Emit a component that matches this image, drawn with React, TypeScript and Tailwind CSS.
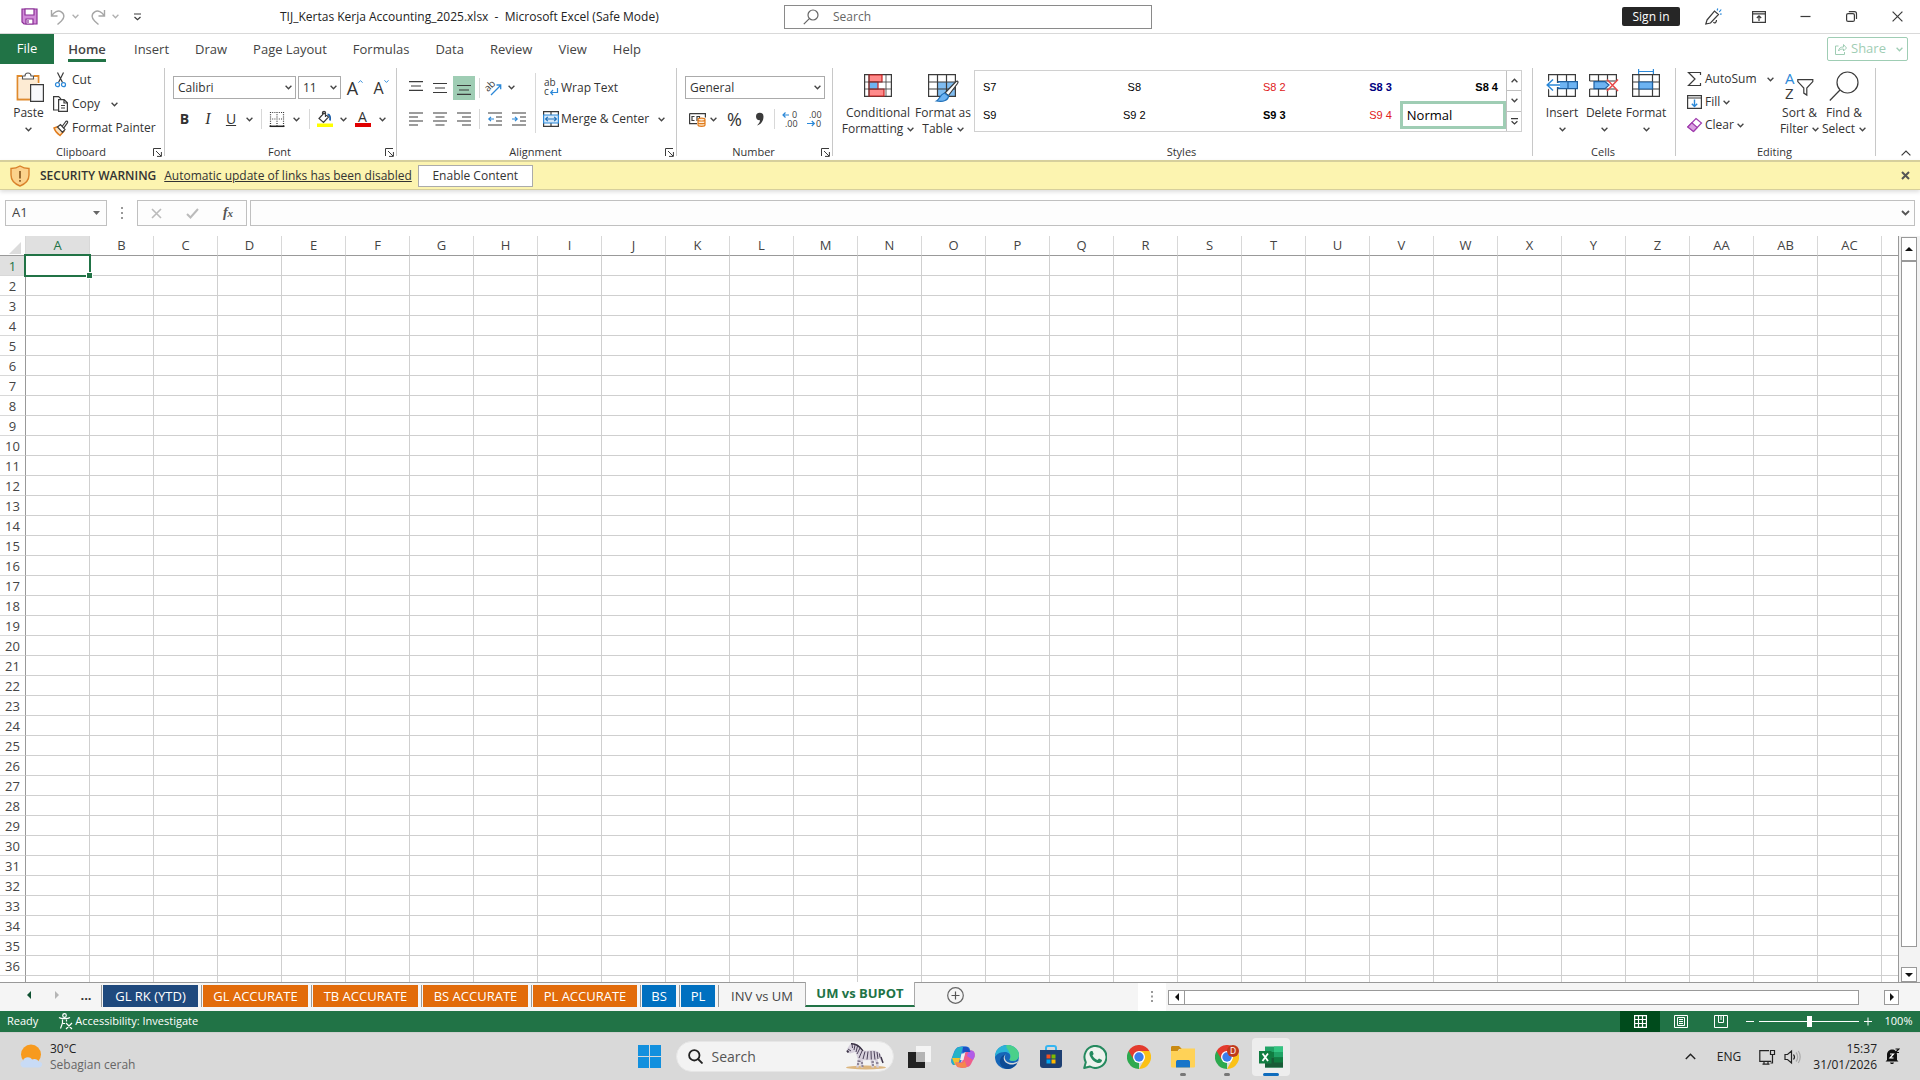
import type { ReactNode } from "react";
import clsx from "clsx";

const columns = [
  "A", "B", "C", "D", "E", "F", "G", "H", "I", "J", "K", "L", "M", "N", "O", "P", "Q", "R", "S", "T",
  "U", "V", "W", "X", "Y", "Z", "AA", "AB", "AC", "",
];
const rows = Array.from({ length: 37 }, (_, i) => (i < 36 ? String(i + 1) : ""));

const ribbonTabs = ["Insert", "Draw", "Page Layout", "Formulas", "Data", "Review", "View", "Help"];

const sheets = [
  { name: "GL RK (YTD)", style: "bg-[#1f497d] w-[95px]" },
  { name: "GL ACCURATE", style: "bg-[#e26b0a] w-[105px]" },
  { name: "TB ACCURATE", style: "bg-[#e26b0a] w-[105px]" },
  { name: "BS ACCURATE", style: "bg-[#e26b0a] w-[105px]" },
  { name: "PL ACCURATE", style: "bg-[#e26b0a] w-[104px]" },
  { name: "BS", style: "bg-[#0070c0] w-[34px]" },
  { name: "PL", style: "bg-[#0070c0] w-[34px]" },
];

const cellStyles = [
  { name: "S7", style: "text-left" },
  { name: "S8", style: "text-center" },
  { name: "S8 2", style: "text-right text-[#e02020]" },
  { name: "S8 3", style: "text-right font-bold text-[#000080]" },
  { name: "S8 4", style: "text-right font-bold" },
  { name: "S9", style: "text-left" },
  { name: "S9 2", style: "text-center" },
  { name: "S9 3", style: "text-right font-bold" },
  { name: "S9 4", style: "text-right text-[#e02020]" },
];

/* ---------- small shared pieces ---------- */

const Chevron = ({ up = false, className = "text-[#444]" }: { up?: boolean; className?: string }) => (
  <svg width="7" height="5" viewBox="0 0 7 5" className={clsx("shrink-0", className)} fill="none" stroke="currentColor" strokeWidth="1.3">
    <path d={up ? "M.6 4.2 3.5 1.2l2.9 3" : "M.6.8l2.9 3 2.9-3"} />
  </svg>
);

const Icon = ({ w = 16, h = 16, children }: { w?: number; h?: number; children: ReactNode }) => (
  <svg width={w} height={h} viewBox={`0 0 ${w} ${h}`} className="shrink-0 overflow-visible" fill="none" stroke="#3b3b3b" strokeWidth="1.2">
    {children}
  </svg>
);

const Tool = ({ label, className, children }: { label: string; className?: string; children: ReactNode }) => (
  <button aria-label={label} className={clsx("flex items-center justify-center h-6 shrink-0", className)}>
    {children}
  </button>
);

const Divider = () => <span className="w-px h-5 bg-[#d8d8d8] shrink-0" />;

const Launcher = ({ label }: { label: string }) => (
  <button aria-label={`${label} settings`} className="shrink-0">
    <Icon w={9} h={9}>
      <path d="M.5 8V.5H8M3 3l5 5M8.4 4v4.4H4" strokeWidth="1" />
    </Icon>
  </button>
);

type GroupProps = { name: string; launcher?: boolean; className: string; children: ReactNode };

const Group = ({ name, launcher, className, children }: GroupProps) => (
  <section className={clsx("flex flex-col h-[88px] border-r border-[#c8c8c8] shrink-0", className)}>
    <div className="flex flex-1 min-w-0">{children}</div>
    <div className="flex items-center h-4 mt-1 mb-[-4px] pr-0.5 text-[11px]">
      {launcher && <span className="w-[9px]" />}
      <span className="flex-1 text-center">{name}</span>
      {launcher && <Launcher label={name} />}
    </div>
  </section>
);

const Combo = ({ label, value, className }: { label: string; value: string; className: string }) => (
  <div className={clsx("relative flex items-center h-[23px] border border-[#ababab] bg-white", className)}>
    <select aria-label={label} defaultValue={value} className="appearance-none w-full h-full pl-1 text-xs bg-transparent outline-none">
      <option>{value}</option>
    </select>
    <span className="absolute right-[3px] pointer-events-none">
      <Chevron />
    </span>
  </div>
);

const BigButton = ({ lines, width, icon }: { lines: string[]; width: string; icon: ReactNode }) => (
  <button className={clsx("flex flex-col items-center shrink-0", width)}>
    <span className="flex items-end justify-center h-[34px] mb-[3px]">{icon}</span>
    <span className="text-xs leading-4 whitespace-nowrap">{lines[0]}</span>
    <span className="flex items-center gap-1 h-4 text-xs leading-4">
      {lines[1]}
      <Chevron />
    </span>
  </button>
);

/* ---------- title bar ---------- */

const TitleBar = () => (
  <header className="flex items-center h-[34px] border-b border-[#d9d9d9] shrink-0">
    <div className="flex flex-1 items-center min-w-0">
      <Tool label="Save" className="w-[18px] ml-5">
        <svg width="17" height="17" viewBox="0 0 17 17" className="shrink-0" fill="#d18bd8" stroke="#8a2f96" strokeWidth="1.2">
          <path d="M1 1h15v15H3l-2-2z" />
          <path d="M4 1h9v6H4zM5 11h7v5H5z" fill="#fff" />
          <path d="M7 12v3" />
        </svg>
      </Tool>
      <Tool label="Undo" className="w-4 ml-3">
        <Icon>
          <path d="M1.5 1v6h6M1.8 6.6C4 3 8 .8 11.2 2.800c4 2.400 3 6.700.2 9.200L7.500 15.500" stroke="#a6a6a6" strokeWidth="1.4" />
        </Icon>
      </Tool>
      <Tool label="Undo history" className="w-[18px]"><Chevron className="text-[#b0b0b0]" /></Tool>
      <Tool label="Redo" className="w-4 ml-1.5">
        <Icon>
          <path d="M14.500 1v6h-6M14.200 6.600C12 3 8 .8 4.800 2.800c-4 2.400-3 6.700-.2 9.200L8.500 15.500" stroke="#a6a6a6" strokeWidth="1.4" />
        </Icon>
      </Tool>
      <Tool label="Redo history" className="w-[18px]"><Chevron className="text-[#b0b0b0]" /></Tool>
      <Tool label="Customize Quick Access Toolbar" className="w-[18px] ml-1">
        <Icon w={9} h={8}><path d="M1 1h7M1.500 4l3 2.800 3-2.800" /></Icon>
      </Tool>
      <h1 className="ml-[134px] text-xs whitespace-pre text-[#222]">TIJ_Kertas Kerja Accounting_2025.xlsx  -  Microsoft Excel (Safe Mode)</h1>
    </div>
    <label className="flex items-center w-[368px] h-6 ml-4 pl-[18px] border border-[#8a8a8a] bg-white">
      <Icon>
        <circle cx="10" cy="6" r="5" stroke="#666" />
        <path d="M6.300 9.700.8 15.200" stroke="#666" />
      </Icon>
      <input aria-label="Search" placeholder="Search" className="flex-1 min-w-0 ml-3.5 text-xs outline-none placeholder:text-[#666]" />
    </label>
    <div className="flex flex-1 items-center justify-end">
      <button className="w-[58px] h-[19px] mr-[10px] rounded-[2px] bg-[#262626] text-white text-xs leading-4">Sign in</button>
      <Tool label="Coming soon" className="w-[46px]">
        <Icon w={17} h={17}>
          <path d="M2 12 9.500 3l4 3.500-8 8.500L.8 16zM8.500 14c1 2 3 .5 3-2" />
          <path d="M12.200 2.500l.5-2M14.200 4l2-2.500M15 6.200l1.800-.2" stroke="#2b88d8" />
        </Icon>
      </Tool>
      <Tool label="Ribbon Display Options" className="w-[46px]">
        <Icon w={14} h={12}><path d="M.6.6h12.800v10.800H.6zM.6 2.800h12.800M7 10V5M4.800 7 7 4.800 9.200 7" /></Icon>
      </Tool>
      <Tool label="Minimize" className="w-[46px]"><Icon w={11} h={11}><path d="M.5 5.500h10" /></Icon></Tool>
      <Tool label="Restore" className="w-[46px]">
        <Icon w={11} h={11}><rect x=".6" y="2.600" width="7.800" height="7.800" rx="1.500" /><path d="M2.800.7H8.500a2 2 0 0 1 2 2V8" /></Icon>
      </Tool>
      <Tool label="Close" className="w-[46px]"><Icon w={11} h={11}><path d="M.6.6l9.800 9.800M10.400.6.6 10.400" /></Icon></Tool>
    </div>
  </header>
);

const TabBar = () => (
  <nav className="flex items-center h-[30px] shrink-0 text-[13px] text-[#444]">
    <button className="w-[54px] h-[30px] bg-[#217346] text-white">File</button>
    <button className="flex flex-col items-center w-[38px] ml-[14px] mt-[3px] font-semibold">
      <span className="leading-5">Home</span>
      <span className="w-[38px] h-[3px] bg-[#217346]" />
    </button>
    <div className="flex ml-[28px] pt-px gap-[26px]">
      {ribbonTabs.map((tab) => (
        <button key={tab} className="whitespace-nowrap">{tab}</button>
      ))}
    </div>
    <button disabled className="flex items-center w-[81px] h-6 ml-auto mr-3 pl-[7px] border border-[#9fcdb4] rounded-[2px] text-[#9fcdb4]">
      <svg width="12" height="12" viewBox="0 0 12 12" fill="none" stroke="currentColor">
        <path d="M3.500 3H.5v8.500h9V9M3.500 8c.5-3 2-4 5-4V1.500l3 3.500-3 3V6c-2.500 0-4 .5-5 2z" />
      </svg>
      <span className="ml-1 flex-1 text-left">Share</span>
      <span className="mr-1"><Chevron className="text-[#9fcdb4]" /></span>
    </button>
  </nav>
);

/* ---------- ribbon ---------- */

const Lines = ({ d }: { d: string }) => (
  <Icon w={14} h={14}><path d={d} /></Icon>
);

const ClipboardGroup = () => (
  <Group name="Clipboard" launcher className="w-[165px]">
    <button className="flex flex-col items-center w-[49px] ml-1">
      <span className="h-[37px] pt-1 pl-1">
        <svg width="29" height="31" viewBox="0 0 29 31" fill="none">
          <path d="M6 4H1.500v23.500H14M18 4h4.500v7" stroke="#e08a2c" strokeWidth="1.800" />
          <path d="M3 6h18v6h-7v14H3z" fill="#fdebd3" />
          <path d="M6.500 7V4H9c0-4 6-4 6 0h2.500v3z" fill="#fff" stroke="#555" strokeWidth="1.100" />
          <path d="M14.600 12.600h12.800v16.800H14.600z" fill="#f8f9fc" stroke="#3b3b3b" strokeWidth="1.200" />
        </svg>
      </span>
      <span className="text-xs leading-4">Paste</span>
      <span className="flex items-center h-4"><Chevron /></span>
    </button>
    <div className="flex flex-col text-xs">
      <button className="flex items-center h-6 gap-1">
        <Icon w={15}>
          <path d="M4.500.5l5 10M10.500.5l-5 10" />
          <circle cx="4.500" cy="12.700" r="2" stroke="#2b88d8" /><circle cx="10.500" cy="12.700" r="2" stroke="#2b88d8" />
        </Icon>
        Cut
      </button>
      <div className="flex items-center h-6">
        <button className="flex items-center gap-1">
          <Icon w={15}>
            <path d="M5 14H.6V.6h5L8 3M5.600 3.600h5.500l3.300 3.200v8.600H5.600zM11 3.800V7h3.300M8 9.500h4M8 12h4" />
          </Icon>
          Copy
        </button>
        <Tool label="Copy options" className="w-5 ml-1"><Chevron /></Tool>
      </div>
      <button className="flex items-center h-6 gap-1 whitespace-nowrap">
        <Icon w={15}>
          <path d="M1 8l4-1.500L11 11l-4 4.500C5 14 2 11.500 1 8z" fill="#fde3c2" stroke="#e07b1c" strokeWidth="1.400" />
          <path d="M4.500 7l3-2.500 4.500 5-2.500 2.800zM9.500 6l3.300-4.500c1-1.200 2.500.2 1.600 1.400L11 7.700" fill="#fff" />
        </Icon>
        Format Painter
      </button>
    </div>
  </Group>
);

const FontGroup = () => (
  <Group name="Font" launcher className="w-[232px]">
    <div className="flex flex-col pl-2 pt-2">
      <div className="flex items-center h-[23px] gap-0.5">
        <Combo label="Font" value="Calibri" className="w-[123px]" />
        <Combo label="Font size" value="11" className="w-[43px]" />
        <Tool label="Increase font size" className="w-6">
          <span className="text-lg leading-5">A</span>
          <span className="self-start mt-[3px]"><Chevron up className="text-[#2b88d8] w-[5px]" /></span>
        </Tool>
        <Tool label="Decrease font size" className="w-5 ml-0.5">
          <span className="text-base leading-5">A</span>
          <span className="self-start mt-[3px]"><Chevron className="text-[#2b88d8] w-[5px]" /></span>
        </Tool>
      </div>
      <div className="flex items-center h-6 mt-2">
        <button className="w-[23px] text-sm font-bold">B</button>
        <button className="w-6 font-[Liberation_Serif,serif] text-base italic">I</button>
        <button className="w-[22px] text-sm underline">U</button>
        <Tool label="Underline style" className="w-[14px]"><Chevron /></Tool>
        <span className="w-[5px]" />
        <Divider />
        <Tool label="Borders" className="w-[30px]">
          <Icon>
            <path d="M1.500 1v14M14.500 1v14M8 1v14M1 1.500h14M1 8h14" strokeDasharray="1 1.200" />
            <path d="M.5 15.300h15" strokeWidth="1.500" stroke="#222" />
          </Icon>
        </Tool>
        <Tool label="Border style" className="w-2"><Chevron /></Tool>
        <span className="w-[9px]" />
        <Divider />
        <Tool label="Fill color" className="w-[29px]">
          <Icon>
            <path d="M7 2 2 7.500l4.500 4 5-5.500zM5.500 4V1.500c0-1.500 3-1.500 3 0V6" fill="#fff" />
            <path d="M10.500 3.500c2.500 0 3 2.500 2.500 6" stroke="#1f5fa8" strokeWidth="1.800" />
            <path d="M0 12.500h16V16H0z" fill="#ffff00" stroke="none" />
          </Icon>
        </Tool>
        <Tool label="Fill color options" className="w-2"><Chevron /></Tool>
        <Tool label="Font color" className="w-[31px]">
          <span className="flex flex-col items-center w-4">
            <span className="h-3 text-sm leading-3">A</span>
            <span className="w-4 h-1 bg-[#e00000]" />
          </span>
        </Tool>
        <Tool label="Font color options" className="w-2"><Chevron /></Tool>
      </div>
    </div>
  </Group>
);

const AlignmentGroup = () => (
  <Group name="Alignment" launcher className="w-[280px]">
    <div className="flex flex-col pl-[7px] pt-2">
      <div className="flex items-center h-[23px]">
        <Tool label="Top align" className="w-6"><Lines d="M0 .6h14M2 5h10M0 9.400h14" /></Tool>
        <Tool label="Middle align" className="w-6"><Lines d="M0 2.500h14M2 7h10M0 11.500h14" /></Tool>
        <Tool label="Bottom align" className="w-[22px] ml-px bg-[#9fcdb4]"><Lines d="M0 4.500h14M2 9h10M0 13.400h14" /></Tool>
        <span className="w-1" />
        <Divider />
        <Tool label="Orientation" className="w-[27px]">
          <Icon w={17}>
            <g transform="rotate(-45 5 6)">
              <text x="-1" y="9" fontSize="10" fill="#3b3b3b" stroke="none">ab</text>
            </g>
            <path d="M6 15 15.500 5.500M11.500 5h4.200v4.200" stroke="#2b88d8" strokeWidth="1.300" />
          </Icon>
        </Tool>
        <Tool label="Orientation options" className="w-2"><Chevron /></Tool>
      </div>
      <div className="flex items-center h-6 mt-2">
        <Tool label="Align left" className="w-6"><Lines d="M0 1h14M0 5h9M0 9h14M0 13h9" /></Tool>
        <Tool label="Center" className="w-6"><Lines d="M0 1h14M2.500 5h9M0 9h14M2.500 13h9" /></Tool>
        <Tool label="Align right" className="w-6"><Lines d="M0 1h14M5 5h9M0 9h14M5 13h9" /></Tool>
        <span className="w-[3px]" />
        <Divider />
        <Tool label="Decrease indent" className="w-[29px]">
          <Icon w={14} h={14}><path d="M0 1h14M8 5h6M8 9h6M0 13h14" /><path d="M6 7H.8M3 4.800.8 7 3 9.200" stroke="#2b88d8" /></Icon>
        </Tool>
        <Tool label="Increase indent" className="w-5">
          <Icon w={14} h={14}><path d="M0 1h14M8 5h6M8 9h6M0 13h14" /><path d="M0 7h5.200M3 4.800 5.200 7 3 9.200" stroke="#2b88d8" /></Icon>
        </Tool>
      </div>
    </div>
    <span className="w-px h-[60px] mt-[5px] ml-[6px] bg-[#d8d8d8]" />
    <div className="flex flex-col pl-[7px] pt-2 text-xs whitespace-nowrap">
      <button className="flex items-center h-[23px] gap-0.5">
        <Icon>
          <text x="1" y="6" fontSize="10" fill="#3b3b3b" stroke="none">ab</text>
          <text x="1" y="15" fontSize="10" fill="#3b3b3b" stroke="none">c</text>
          <path d="M14.500 8v4.500H8M10 10l-2.300 2.500L10 15" stroke="#2b88d8" />
        </Icon>
        Wrap Text
      </button>
      <div className="flex items-center h-6 mt-2">
        <button className="flex items-center gap-0.5">
          <Icon>
            <path d="M.6.6h14.800v14.800H.6zM8 .6V4M8 12v3.400" />
            <path d="M.6 4h14.800v8H.6z" fill="#d5e9fa" stroke="#2b88d8" />
            <path d="M2.500 8h11M4.800 5.800 2.600 8l2.200 2.200M11.200 5.800 13.400 8l-2.200 2.200" stroke="#1f6fb8" />
          </Icon>
          Merge &amp; Center
        </button>
        <Tool label="Merge options" className="w-5 ml-0.5"><Chevron /></Tool>
      </div>
    </div>
  </Group>
);

const NumberGroup = () => (
  <Group name="Number" launcher className="w-[156px]">
    <div className="flex flex-col pl-2 pt-2">
      <Combo label="Number format" value="General" className="w-[140px]" />
      <div className="flex items-center h-6 mt-2">
        <Tool label="Accounting format" className="w-6">
          <Icon w={17}>
            <path d="M.6 2.600h15.800v4M.6 2.600v10H8M5.500 5.500H3v4h2.500M8 10V5.500h2.500v2" />
            <path d="M9 8.500c0-1.800 7-1.800 7 0v5.500c0 1.800-7 1.800-7 0zM9 8.800c0 1.600 7 1.600 7 0M9 11.500c0 1.600 7 1.600 7 0" fill="#fde3c2" stroke="#e07b1c" />
          </Icon>
        </Tool>
        <Tool label="Accounting options" className="w-2"><Chevron /></Tool>
        <Tool label="Percent style" className="w-[35px]"><span className="text-lg leading-5">%</span></Tool>
        <Tool label="Comma style" className="w-[14px]">
          <Icon w={9} h={13}><path d="M1 3.500a3.500 3.500 0 0 1 7.500 0C8.500 8 6 11.500 2 12.500c2-2 3-3.500 3-5.200C2.500 7.500 1 6 1 3.500z" fill="#3b3b3b" stroke="none" /></Icon>
        </Tool>
        <span className="w-2" />
        <Divider />
        <Tool label="Increase decimal" className="w-[30px]">
          <Icon w={17}>
            <path d="M7 4H1.200M3.500 1.500 1 4l2.500 2.500" stroke="#2b88d8" />
            <text x="10" y="7" fontSize="9" fill="#3b3b3b" stroke="none">0</text>
            <text x="3" y="16" fontSize="9" fill="#3b3b3b" stroke="none">.00</text>
          </Icon>
        </Tool>
        <Tool label="Decrease decimal" className="w-[18px]">
          <Icon w={17}>
            <text x="3" y="7" fontSize="9" fill="#3b3b3b" stroke="none">.00</text>
            <path d="M1 12.500h7M5.800 10l2.500 2.500L5.800 15" stroke="#2b88d8" />
            <text x="10" y="16" fontSize="9" fill="#3b3b3b" stroke="none">0</text>
          </Icon>
        </Tool>
      </div>
    </div>
  </Group>
);

const StylesGroup = () => (
  <Group name="Styles" className="flex-1 min-w-0">
    <div className="flex pl-[11px]">
      <BigButton
        lines={["Conditional", "Formatting"]}
        width="w-[68px]"
        icon={
          <Icon w={28} h={28}>
            <path d="M.6.6h26.800v21.800H.6z" fill="#fff" />
            <path d="M5 1h13v7H5zM5 15h15v7H5z" fill="#ff8a8a" stroke="#c22" />
            <path d="M5 8h9v7H5z" fill="#6db3f2" stroke="#c22" />
            <path d="M.6 8h26.800M.6 15h26.800M5 .6v21.800M22 .6v21.800" strokeWidth=".8" />
          </Icon>
        }
      />
      <BigButton
        lines={["Format as", "Table"]}
        width="w-[62px]"
        icon={
          <Icon w={31} h={28}>
            <path d="M9 8h18v14.400H9z" fill="#7fbcf0" stroke="none" />
            <path d="M.6.6h26.800v21.800H.6zM.6 8h26.800M.6 15h26.800M9.500.6v21.800M18.500.6v21.800" />
            <path d="M28 7.500c2-1 2.500.5 1.500 2l-9 12-3.500-2.500z" fill="#fff" />
            <path d="M16.500 19l4 3c0 4-5 6.500-12 5 3.500-1.500 3-6.500 8-8z" fill="#6db3f2" stroke="#1f6fb8" />
          </Icon>
        }
      />
    </div>
    <div className="flex flex-1 min-w-0 h-[62px] mt-0.5 mr-[10px] border border-[#d0d0d0] bg-white">
      <div className="grid flex-1 grid-cols-5 grid-rows-2 pt-0.5 pb-0.5 font-[Liberation_Sans,sans-serif] text-[11px] text-black">
        {cellStyles.map((s) => (
          <button key={s.name} className={clsx("px-2", s.style)}>{s.name}</button>
        ))}
        <button className="border-3 border-[#9fcdb4] pl-1 text-left font-[Open_Sans,sans-serif] text-[13px] leading-4">Normal</button>
      </div>
      <div className="flex flex-col w-[15px] border-l border-[#c0c0c0]">
        <Tool label="Previous styles" className="flex-1 border-b border-[#c0c0c0]"><Chevron up /></Tool>
        <Tool label="Next styles" className="flex-1 border-b border-[#c0c0c0]"><Chevron /></Tool>
        <Tool label="More styles" className="flex-1"><Icon w={7} h={7}><path d="M0 .6h7M.6 3.200l2.900 2.800 2.900-2.800" /></Icon></Tool>
      </div>
    </div>
  </Group>
);

const CellsGroup = () => (
  <Group name="Cells" className="w-[143px]">
    <div className="flex pl-2">
      <BigButton
        lines={["Insert", ""]}
        width="w-[42px]"
        icon={
          <Icon w={32} h={28}>
            <path d="M2.600.6h26.800v21.800H2.600zM11.500.6v21.800M20.500.6v21.800" />
            <path d="M12 7.600h19.400v7H12z" fill="#6db3f2" stroke="#1f5f9f" /><path d="M22 8v6.500" stroke="#1f5f9f" />
            <path d="M14 11H1M7 5.500 1.200 11 7 16.500" stroke="#fff" strokeWidth="4" />
            <path d="M14 11H1M7 5.500 1.200 11 7 16.500" stroke="#2b88d8" strokeWidth="1.500" />
          </Icon>
        }
      />
      <BigButton
        lines={["Delete", ""]}
        width="w-[42px]"
        icon={
          <Icon w={30} h={28}>
            <path d="M.6 7V.6h26.800V7M.6 15v7.400h26.800V15M9.500.6V7M18.500.6V7M9.500 15v7.400M18.500 15v7.400M.6 7h26M.6 15h26" />
            <path d="M5 7.600h11l4 3.500-4 3.500H5z" fill="#6db3f2" stroke="#1f5f9f" />
            <path d="M18 5.500 29 17M29 5.500 18 17" stroke="#e84a4a" strokeWidth="1.500" />
          </Icon>
        }
      />
      <BigButton
        lines={["Format", ""]}
        width="w-[42px]"
        icon={
          <Icon w={28} h={33}>
            <path d="M6.600 0v5M21.400 0v5M7 2.500h14" stroke="#2b88d8" />
            <path d="M.6 5.600h26.800v21.800H.6zM.6 13h26.800M.6 20h26.800M7 5.600v21.800M20.500 5.600v21.800" />
            <path d="M7 13h13.500v7H7z" fill="#6db3f2" stroke="#1f5f9f" />
          </Icon>
        }
      />
    </div>
  </Group>
);

const EditingGroup = () => (
  <Group name="Editing" className="w-[200px]">
    <div className="flex flex-col w-[102px] pl-[11px] text-xs">
      <div className="flex items-center h-[22px]">
        <button className="flex items-center gap-[3px]">
          <Icon w={15}><path d="M13.500 4V1.500H1.500L8 8l-6.500 6.500h12V12" /></Icon>
          AutoSum
        </button>
        <Tool label="AutoSum options" className="w-4 ml-auto"><Chevron /></Tool>
      </div>
      <button className="flex items-center h-6 gap-[3px]">
        <Icon w={15}>
          <path d="M.6 1.600h13.800v12.800H.6zM.6 4h13.800" /><path d="M7.500 5.500v7M4.800 9.800l2.700 2.700 2.700-2.700" stroke="#2b88d8" strokeWidth="1.400" />
        </Icon>
        Fill <Chevron />
      </button>
      <button className="flex items-center h-[22px] gap-[3px]">
        <Icon w={15}>
          <path d="M9 1.500 14.500 6 6.500 14.500.8 10z" fill="#fff" stroke="#a03cae" /><path d="M4.800 5.800 10.300 10.500 6.500 14.500.8 10z" fill="#d9a0e0" stroke="#a03cae" />
        </Icon>
        Clear <Chevron />
      </button>
    </div>
    <BigButton
      lines={["Sort &", "Filter"]}
      width="w-[43px]"
      icon={
        <Icon w={29} h={30}>
          <text x="0" y="12" fontSize="15" fill="#2b88d8" stroke="none">A</text>
          <text x="0" y="27" fontSize="15" fill="#3b3b3b" stroke="none">Z</text>
          <path d="M12.800 7.600h15v2l-6 6.500v7l-3-2v-5l-6-6.500z" />
        </Icon>
      }
    />
    <BigButton
      lines={["Find &", "Select"]}
      width="w-[46px]"
      icon={<Icon w={30} h={31}><circle cx="18.500" cy="11.500" r="10.500" /><path d="M11 19 .8 29.500" /></Icon>}
    />
  </Group>
);

const Ribbon = () => (
  <div className="flex h-24 pt-1 shrink-0 text-[#333]">
    <ClipboardGroup />
    <FontGroup />
    <AlignmentGroup />
    <NumberGroup />
    <StylesGroup />
    <CellsGroup />
    <EditingGroup />
    <button aria-label="Collapse the Ribbon" className="flex items-end justify-center w-[44px] pl-4 pb-1">
      <Icon w={10} h={6}><path d="M.6 5.400 5 1l4.400 4.400" /></Icon>
    </button>
  </div>
);

/* ---------- message bar and formula bar ---------- */

const SecurityWarning = () => (
  <div role="alert" className="flex items-center h-[30px] px-[10px] border-t-2 border-b border-[#d6cf9c] bg-[#fcf4b0] shrink-0 text-xs text-[#333] shadow-[0_2px_4px_#0002]">
    <svg width="20" height="22" viewBox="0 0 20 22" fill="#fbd28b" stroke="#d9822b" strokeWidth="1.400">
      <path d="M10 1c3 2 6 2.500 9 2.500V10c0 5.500-4 9-9 11-5-2-9-5.500-9-11V3.500C4 3.500 7 3 10 1z" />
      <path d="M10 6v7.500M10 15v1.800" stroke="#7a4a12" strokeWidth="1.500" />
    </svg>
    <span className="ml-[10px] font-semibold">SECURITY WARNING</span>
    <a href="#links" className="ml-2 underline">Automatic update of links has been disabled</a>
    <button className="w-[115px] h-[22px] ml-1.5 border border-[#ababab] bg-white">Enable Content</button>
    <button aria-label="Close message" className="ml-auto">
      <svg width="9" height="9" viewBox="0 0 9 9" stroke="#555" strokeWidth="2"><path d="M1 1l7 7M8 1 1 8" /></svg>
    </button>
  </div>
);

const FormulaBar = () => (
  <div className="flex items-center h-[46px] px-[5px] shrink-0 text-[#444]">
    <div className="flex items-center w-[102px] h-[26px] pr-1.5 border border-[#c0c0c0] bg-[#fdfdfd]">
      <input aria-label="Name Box" defaultValue="A1" className="flex-1 min-w-0 pl-1.5 text-[13px] outline-none" />
      <svg width="7" height="5" viewBox="0 0 7 5" fill="#666"><path d="M0 0h7L3.500 4z" /></svg>
    </div>
    <svg width="30" height="12" viewBox="0 0 30 12" fill="#999"><path d="M14 0h2v2h-2zM14 5h2v2h-2zM14 10h2v2h-2z" /></svg>
    <div className="flex items-center w-[110px] h-[26px] border border-[#c0c0c0] bg-[#fdfdfd]">
      <Tool label="Cancel" className="w-9"><svg width="11" height="11" viewBox="0 0 11 11" stroke="#bbb" strokeWidth="1.600"><path d="M1 1l9 9M10 1l-9 9" /></svg></Tool>
      <Tool label="Enter" className="w-9"><svg width="13" height="11" viewBox="0 0 13 11" fill="none" stroke="#bbb" strokeWidth="2"><path d="M1 6l3.500 3.500L12 1" /></svg></Tool>
      <button className="w-9 font-[Liberation_Serif,serif] text-sm leading-5 font-bold italic text-[#555]">f<span className="text-[11px]">x</span></button>
    </div>
    <div className="flex flex-1 items-center h-[26px] ml-[3px] pr-1 border border-[#c0c0c0] bg-[#fdfdfd]">
      <input aria-label="Formula Bar" className="flex-1 min-w-0 px-2 text-[13px] outline-none" />
      <svg width="9" height="6" viewBox="0 0 9 6" fill="none" stroke="#555" strokeWidth="1.800"><path d="M1 1l3.500 3.500L8 1" /></svg>
    </div>
  </div>
);

/* ---------- worksheet ---------- */

const Arrow = ({ d }: { d: string }) => (
  <svg width="8" height="8" viewBox="0 0 8 8" fill="#111"><path d={d} /></svg>
);

const VerticalScroll = () => (
  <div className="flex flex-col w-[21px] pt-px pl-0.5 pr-[3px] bg-[#f3f3f3] shrink-0">
    <Tool label="Scroll up" className="h-4 border border-[#999] bg-white"><Arrow d="M0 6h8L4 2z" /></Tool>
    <div className="flex-1 mb-5 border border-[#999] bg-white" />
    <Tool label="Scroll down" className="h-[15px] border border-[#999] bg-white"><Arrow d="M0 2h8L4 6z" /></Tool>
  </div>
);

const Sheet = () => (
  <div className="flex flex-1 min-h-0 border-b border-[#999]">
    <div className="flex-1 min-w-0 overflow-hidden border-r border-[#999]">
      <table className="w-max table-fixed border-separate border-spacing-0 text-[13px] leading-[18px] text-[#444]">
        <thead>
          <tr>
            <th className="w-[26px] min-w-[26px] h-5 p-0 border-r border-b border-r-[#d8d8d8] border-b-[#999]">
              <svg width="14" height="14" viewBox="0 0 14 14" className="ml-2 mt-1" fill="#dcdcdc"><path d="M13 1v12H1z" /></svg>
            </th>
            {columns.map((col, i) => (
              <th
                key={i}
                scope="col"
                className={clsx(
                  "w-16 min-w-16 h-5 p-0 pb-px border-r border-b border-r-[#d8d8d8] border-b-[#999] font-normal",
                  i === 0 && "bg-[#e0e0e0] text-[#217346]",
                )}
              >
                {col}
              </th>
            ))}
          </tr>
        </thead>
        <tbody>
          {rows.map((row, r) => (
            <tr key={r}>
              <th
                scope="row"
                className={clsx(
                  "h-5 p-0 border-r border-b border-r-[#999] border-b-[#d8d8d8] font-normal",
                  r === 0 && "bg-[#e0e0e0] text-[#217346]",
                )}
              >
                {row}
              </th>
              {columns.map((_, c) => (
                <td key={c} className={clsx("h-5 p-0 border-r border-b border-[#cfcfcf]", r === 0 && c === 0 && "relative")}>
                  {r === 0 && c === 0 && (
                    <span className="absolute z-10 -left-0.5 -top-0.5 -right-0.5 -bottom-0.5 border-2 border-[#217346]">
                      <span className="absolute -right-[3px] -bottom-[3px] size-[5px] bg-[#217346] outline outline-white" />
                    </span>
                  )}
                </td>
              ))}
            </tr>
          ))}
        </tbody>
      </table>
    </div>
    <VerticalScroll />
  </div>
);

const SheetTabs = () => (
  <div className="flex items-start h-[28px] bg-[#f5f5f5] shrink-0 text-[13px] text-white">
    <Tool label="Previous sheet" className="w-[28px] ml-[15px]"><svg width="6" height="8" viewBox="0 0 6 8" fill="#0f5132"><path d="M5 0v8L1 4z" /></svg></Tool>
    <Tool label="Next sheet" className="w-[28px]"><svg width="6" height="8" viewBox="0 0 6 8" fill="#b5b5b5"><path d="M1 0v8l4-4z" /></svg></Tool>
    <button className="w-[30px] h-6 font-bold leading-6 text-[#333]">...</button>
    <div className="flex gap-1 pt-0.5">
      {sheets.map((s) => (
        <div key={s.name} className="flex pl-px border-l border-[#999]">
          <button className={clsx("h-[22px] leading-[22px] -mr-px whitespace-nowrap", s.style)}>{s.name}</button>
        </div>
      ))}
      <button className="w-[87px] h-[22px] leading-[22px] border-l border-[#999] text-[#444] whitespace-nowrap">INV vs UM</button>
    </div>
    <button className="w-[110px] h-[25px] -mt-px border-x border-b-2 border-x-[#aaa] border-b-[#217346] bg-white font-bold text-[#217346]">UM vs BUPOT</button>
    <Tool label="New sheet" className="w-20">
      <Icon w={17} h={17}><circle cx="8.500" cy="8.500" r="7.800" stroke="#666" /><path d="M8.500 4.500v8M4.500 8.500h8" stroke="#555" /></Icon>
    </Tool>
    <div className="flex items-center ml-auto h-[28px]">
      <svg width="28" height="28" viewBox="0 0 28 28" fill="#999"><path d="M0 0h28v28H0z" fill="#fff" /><path d="M13 8h2v2h-2zM13 12.500h2v2h-2zM13 17h2v2h-2z" /></svg>
      <Tool label="Scroll left" className="w-4 h-[15px] ml-0.5 border border-r-0 border-[#999] bg-white"><Arrow d="M6 0v8L2 4z" /></Tool>
      <div className="w-[675px] h-[15px] border border-[#999] bg-white" />
      <Tool label="Scroll right" className="w-[15px] h-[15px] ml-[25px] mr-[21px] border border-[#999] bg-white"><Arrow d="M2 0v8l4-4z" /></Tool>
    </div>
  </div>
);

const StatusBar = () => (
  <footer className="flex items-center h-[21px] pl-[7px] bg-[#217346] shrink-0 text-[11px] text-white">
    <span>Ready</span>
    <button className="flex items-center gap-0.5 ml-5">
      <svg width="15" height="17" viewBox="0 0 15 17" fill="none" stroke="#fff" strokeWidth="1.200">
        <circle cx="6.500" cy="2.500" r="1.800" />
        <path d="M1 4.500c2 1.500 9 1.500 11 0M4.500 6.500v3.500L2.500 15.500M8.500 6.500v2M5 10.500h2M8 10l6 6M14 10l-6 6" />
      </svg>
      Accessibility: Investigate
    </button>
    <div className="flex items-center ml-auto">
      <Tool label="Normal view" className="w-10 h-[21px] bg-[#004b1c]">
        <svg width="13" height="13" viewBox="0 0 13 13" fill="none" stroke="#fff" strokeWidth="1.200"><path d="M.6.6h11.800v11.800H.6zM4.500.6v11.800M8.500.6v11.800M.6 4.500h11.800M.6 8.500h11.800" /></svg>
      </Tool>
      <Tool label="Page layout view" className="w-[41px] h-[21px]">
        <svg width="14" height="13" viewBox="0 0 14 13" fill="none" stroke="#fff"><path d="M.5.5h13v12H.5zM3.500 2.500h7v8h-7zM5 4.500h4M5 6.500h4M5 8.500h4" /></svg>
      </Tool>
      <Tool label="Page break preview" className="w-10 h-[21px]">
        <svg width="14" height="13" viewBox="0 0 14 13" fill="none" stroke="#fff"><path d="M.5.5h13v12H.5zM4.500.5v7h5v-7M7 .5V5" /></svg>
      </Tool>
      <Tool label="Zoom out" className="w-[18px]"><svg width="8" height="9" viewBox="0 0 8 9" stroke="#fff"><path d="M0 4.500h8" /></svg></Tool>
      <input
        type="range"
        aria-label="Zoom"
        defaultValue={50}
        className="appearance-none w-[100px] h-px bg-white [&::-webkit-slider-thumb]:appearance-none [&::-webkit-slider-thumb]:w-[5px] [&::-webkit-slider-thumb]:h-[11px] [&::-webkit-slider-thumb]:bg-white"
      />
      <Tool label="Zoom in" className="w-[18px]"><svg width="8" height="9" viewBox="0 0 8 9" stroke="#fff"><path d="M0 4.500h8M4 .5v8" /></svg></Tool>
      <button className="w-[43px]">100%</button>
    </div>
  </footer>
);

/* ---------- taskbar ---------- */

const ChromeLogo = () => (
  <g>
    <path d="M12 12v12A12 12 0 0 1 1.600 6z" fill="#2da94f" />
    <path d="M12 6h10.400A12 12 0 0 0 1.600 6L7 15z" fill="#e33b2e" />
    <path d="M12 6h10.400A12 12 0 0 1 12 24l5.200-9z" fill="#fbc116" />
    <circle cx="12" cy="12" r="6" fill="#fff" />
    <circle cx="12" cy="12" r="4.700" fill="#3b7ded" />
  </g>
);

const Zebra = () => (
  <svg width="42" height="27" viewBox="0 0 42 27" className="shrink-0">
    <ellipse cx="21" cy="24.500" rx="20" ry="1.900" fill="#dcb67f" />
    <path d="M2 6 5 1.500 7 0l5 1.500c3 1.500 5 4 6.500 6 5 .8 9-.5 13 .5 3.500 1 4.500 4 5 8l2.500 3-2.500 0-3-5-1 2 1.500 8.500h-2.500L30 17.500l-1.500-.5.5 7.500h-2.500L25.500 17l-7.500.3.200 7.200h-2.400L15 17.500 13.500 24.500H11.200l1.600-8.500L10.500 9 5 10.500 2.500 9z" fill="#d6d0dc" />
    <path d="M7 1l.5 4M10 2l-1 5M12.500 3l-1.500 6M15 5l-3 6M17 8l-3 7M20 8.500l-2 7.500M23 8.500l-1 8M26 8l.3 8.500M29 8l1 8.500M32 9l1 7M34.500 10.500l.5 4M3 6l3 2M12.500 18l3 .3M12 21h2.200M16 20h2M26.500 19h2.500M31 20h2.500M16.500 23h2M27 22h2" stroke="#4a4058" strokeWidth="1" fill="none" />
    <path d="M6 .8c5-.5 9 3 12 7M36 14l2 6" stroke="#3a3245" strokeWidth="1.400" fill="none" />
    <path d="M2 7.500l1.500 2" stroke="#3a3245" strokeWidth="2" />
  </svg>
);

const taskbarApps = [
  {
    name: "Task View",
    icon: (
      <>
        <path d="M9 1h15v16H9z" fill="#f4f4f4" />
        <path d="M1 7h17v16H1z" fill="#222" />
        <path d="M9 7h9v10H9z" fill="#b4b4b4" />
      </>
    ),
  },
  {
    name: "Copilot",
    icon: (
      <>
        <path d="M8 2c1-1 8-1.500 10 .5 1 1.200 1.200 3 2 4.500h-5c-2 0-2.500 1-3 3l-2 7c-.7 2.500-2 3-4 3H3.500C.5 20-.2 17 .5 14L3 7c1-3 3-5 5-5z" fill="#2b7de0" />
        <path d="M3 8c1-3 3-6 6-6h3L8 16c-.6 2-2 3.500-4 4-3 0-4-3-3.300-6z" fill="#24b3c8" />
        <path d="M1 13l3 7c2 0 3.500-1.500 4-3l1-4z" fill="#f2c230" />
        <path d="M16 22c-1 1-8 1.500-10-.5-1-1-1-2.500-2-4h5c2 0 2.500-1 3-3l2-6c.7-2 2-3 4-3h2.500c3 .5 3.700 3.500 3 6.500L21 17c-1 3-3 5-5 5z" fill="#ee5d8c" />
        <path d="M19 5.500h1.500c3 .5 3.700 3.500 3 6.500L22 15l-6-4 1.500-4z" fill="#b05de8" />
        <path d="M5 18h5c2 0 3-1 3.500-3L16 22c-3 1-8 1-10-.5z" fill="#f5874d" />
        <path d="M10.500 8.500h3.500L12.500 15H9z" fill="#eee" />
        <path d="M12 2h3.500c2 0 2.500 2 4 5h-5l-3 .5z" fill="#1b4fc4" />
      </>
    ),
  },
  {
    name: "Edge",
    icon: (
      <>
        <circle cx="12" cy="12" r="12" fill="#1666b8" />
        <path d="M0 12C0 4 6 0 12 0c7 0 12 5 12 10 0 4-3 6-6.500 6-2 0-3-.8-3-1.500s1-1 1-3C15.500 9 13 7 9.500 7 4 7 1 10 0 12z" fill="#2cb3d8" />
        <path d="M12 0c7 0 12 5 12 10 0 4-3 6-6.500 6-2 0-3-.8-3-1.500s1-1 1-3C15.500 6 9 2 12 0z" fill="#4bd08a" />
        <path d="M22 18c-2 4-6 6-10 6-5-1-8-5-7-9 .5-3 3-5 5-5.500C7 13 9 19 16 19.500c2.500 0 4.500-1 6-1.500z" fill="#0d4a94" />
        <path d="M11.500 9c-3 2-2 6 1 8 2.500 1.500 7 1.500 10.500-1l-.8 2c-2 1.200-5 2-8 1.200C8 17.500 7 11 11.500 9z" fill="#d9d9d9" />
      </>
    ),
  },
  {
    name: "Microsoft Store",
    icon: (
      <>
        <path d="M7 6V3c0-1.500 1-2 2-2h6c1 0 2 .5 2 2v3" fill="none" stroke="#35b5f0" strokeWidth="2" />
        <path d="M1 5h22v15c0 2-1 3-3 3H4c-2 0-3-1-3-3z" fill="#1d3f72" />
        <path d="M7.500 9.500h4v4h-4z" fill="#f25022" /><path d="M12.500 9.500h4v4h-4z" fill="#7fba00" />
        <path d="M7.500 14.500h4v4h-4z" fill="#00a4ef" /><path d="M12.500 14.500h4v4h-4z" fill="#ffb900" />
      </>
    ),
  },
  {
    name: "WhatsApp",
    icon: (
      <>
        <path d="M1.200 23 2.800 17.200A11 11 0 1 1 7 21.500z" fill="#eef3ee" stroke="#258a5f" strokeWidth="2" strokeLinejoin="round" />
        <path d="M8 6c-2 1-2 3.500-.5 6 2 3.500 5 6 8.500 6 2 0 3-1.500 3-3l-3-1.500-1.500 1.500c-2-.7-4-2.500-5-4.500l1.200-1.500L9.500 6z" fill="#258a5f" />
      </>
    ),
  },
  { name: "Chrome", icon: <ChromeLogo /> },
  {
    name: "File Explorer",
    running: true,
    icon: (
      <>
        <path d="M0 2.500C0 1.500.500 1 1.500 1H8l3 3h-3l-2 3H0z" fill="#c98a12" />
        <path d="M0 6h7l3-2.500h14V21c0 1-.5 1.500-1.500 1.500h-21C.5 22.500 0 22 0 21z" fill="#ffd257" />
        <path d="M5 22.500V17c0-1.500 1-2 2-2h10c1 0 2 .5 2 2v5.500z" fill="#1875c9" />
      </>
    ),
  },
  {
    name: "Chrome (D)",
    running: true,
    icon: (
      <>
        <ChromeLogo />
        <circle cx="18" cy="6" r="6" fill="#c0391b" />
        <text x="15" y="9" fontSize="8.500" fill="#fff">D</text>
      </>
    ),
  },
  {
    name: "Excel",
    active: true,
    icon: (
      <>
        <path d="M6 1.500h18v21H6z" fill="#21a366" />
        <path d="M15 1.500h9v5.500h-9z" fill="#33c481" /><path d="M6 7h9v5.500H6z" fill="#107c41" />
        <path d="M6 12.500h18v10H6z" fill="#185c37" /><path d="M15 12.500h9v5h-9z" fill="#107c41" />
        <path d="M0 6h12.500v12.500H0z" fill="#107c41" />
        <path d="M3.500 8.500l5.500 7.500M9 8.500 3.500 16" stroke="#fff" strokeWidth="1.800" />
      </>
    ),
  },
];

const Taskbar = () => (
  <div className="flex items-center h-12 border-t border-[#cfcfcf] bg-[#d9d9d9] shrink-0 text-xs">
    <div className="flex flex-1 items-center">
      <svg width="24" height="25" viewBox="0 0 24 25" className="ml-5">
        <circle cx="11" cy="10.500" r="10" fill="#f79a1e" />
        <path d="M4 23.500c-4 0-5-5.500-1-6.500.5-4 7-5 9-1.500 3-1.500 6 0 6.500 2 5 .5 4.500 6 0 6z" fill="#c8dbf6" />
      </svg>
      <div className="ml-1.5 leading-4">
        <p className="text-[#222]">30°C</p>
        <p className="text-[#666]">Sebagian cerah</p>
      </div>
    </div>
    <div className="flex items-center">
      <Tool label="Start" className="w-11">
        <svg width="23" height="23" viewBox="0 0 23 23" fill="#1290de"><path d="M0 0h11v11H0zM12 0h11v11H12zM0 12h11v11H0zM12 12h11v11H12z" /></svg>
      </Tool>
      <label className="flex items-center w-[218px] h-[31px] ml-1 mr-[3px] pl-[11px] pr-1.5 rounded-full bg-[#f3f3f3] border border-[#e6e6e6]">
        <svg width="15" height="15" viewBox="0 0 15 15" fill="none" stroke="#222" strokeWidth="1.800"><circle cx="6.300" cy="6.300" r="5.200" /><path d="M10 10l4.500 4.500" /></svg>
        <input aria-label="Windows search" placeholder="Search" className="flex-1 min-w-0 ml-[9px] text-sm outline-none placeholder:text-[#555]" />
        <Zebra />
      </label>
      {taskbarApps.map((app) => (
        <button key={app.name} aria-label={app.name} className="flex justify-center w-11">
          <span className={clsx("flex flex-col items-center justify-between w-[38px] h-[38px] pt-[7px] rounded", app.active && "bg-[#ededed]")}>
            <svg width="24" height="24" viewBox="0 0 24 24">{app.icon}</svg>
            {app.running && <span className="w-1.5 h-[3px] rounded-full bg-[#777]" />}
            {app.active && <span className="w-4 h-[3px] rounded-full bg-[#0f6cbd]" />}
          </span>
        </button>
      ))}
    </div>
    <div className="flex flex-1 items-center justify-end text-[#222]">
      <Tool label="Show hidden icons" className="w-6"><Icon w={11} h={7}><path d="M.8 6 5.500 1.200 10.200 6" stroke="#222" strokeWidth="1.400" /></Icon></Tool>
      <button className="ml-[14px]">ENG</button>
      <button aria-label="Network and volume" className="flex items-center gap-2 ml-[18px]">
        <Icon w={17}>
          <path d="M10 1.600H.8V12.400h11.500M3.500 15.200h7M5 12.600v2.400M9 12.600v2.400M11.500 1.500h4v4h-4zM13.500 5.500V14h-2" stroke="#222" />
        </Icon>
        <Icon w={17}>
          <path d="M1 5.500h2.500L7.500 2v12l-4-3.500H1zM9.500 5.500c1.200 1.500 1.200 3.500 0 5" stroke="#222" /><path d="M12 3.500c2.200 2.500 2.200 6.500 0 9M14.300 2c2.500 3.500 2.500 8.500 0 12" stroke="#aaa" />
        </Icon>
      </button>
      <div className="ml-3 text-right leading-4">
        <p>15:37</p>
        <p>31/01/2026</p>
      </div>
      <button aria-label="Notifications" className="ml-2 mr-5">
        <svg width="15" height="17" viewBox="0 0 15 17" fill="#111">
          <path d="M2 12V7c0-4 3-5.500 5-5.500 3 0 5 2 5 5.500v5l1.500 1.500H.5zM5 14.500h4c-.5 2-3.500 2-4 0z" />
          <path d="M5 6h3.500L5 10h3.500" fill="none" stroke="#fff" strokeWidth="1.200" />
          <path d="M10.500 1H14l-3.500 3.500H14" fill="none" stroke="#111" strokeWidth="1.200" />
        </svg>
      </button>
    </div>
  </div>
);

const App = () => (
  <div className="flex flex-col h-screen overflow-hidden bg-white font-[Open_Sans,Noto_Sans,sans-serif]">
    <TitleBar />
    <TabBar />
    <Ribbon />
    <SecurityWarning />
    <FormulaBar />
    <Sheet />
    <SheetTabs />
    <StatusBar />
    <Taskbar />
  </div>
);

export default App;
